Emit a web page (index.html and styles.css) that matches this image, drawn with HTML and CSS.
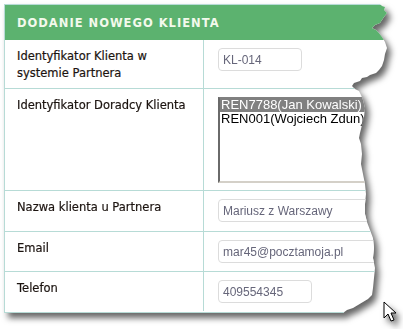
FILE: index.html
```html
<!DOCTYPE html>
<html lang="pl">
<head>
<meta charset="utf-8">
<title>Dodanie nowego klienta</title>
<link rel="stylesheet" href="styles.css">
</head>
<body>
<div class="stage">
  <div class="paper">
    <div class="head">Dodanie nowego klienta</div>
    <div class="row r1">
      <div class="label">Identyfikator Klienta w systemie Partnera</div>
      <div class="value"><input class="field f-short" type="text" value="KL-014"></div>
    </div>
    <div class="row r2">
      <div class="label">Identyfikator Doradcy Klienta</div>
      <div class="value">
        <div class="listbox" role="listbox">
          <div class="opt sel" role="option">REN7788(Jan Kowalski)</div>
          <div class="opt" role="option">REN001(Wojciech Zdun)</div>
        </div>
      </div>
    </div>
    <div class="row r3">
      <div class="label">Nazwa klienta u Partnera</div>
      <div class="value"><input class="field f-long" type="text" value="Mariusz z Warszawy"></div>
    </div>
    <div class="row r4">
      <div class="label">Email</div>
      <div class="value"><input class="field f-long" type="text" value="mar45@pocztamoja.pl"></div>
    </div>
    <div class="row r5">
      <div class="label">Telefon</div>
      <div class="value"><input class="field f-mid" type="text" value="409554345"></div>
    </div>
  </div>
  <svg class="cursor" width="14" height="22" viewBox="0 0 14 22" aria-hidden="true">
    <path d="M1 1 L1 17 L5 13 L8 20 L11 19 L8 12 L13 12 Z" fill="#fff" stroke="#000" stroke-width="1" stroke-linejoin="miter"/>
  </svg>
</div>
</body>
</html>
```
FILE: styles.css
```css
html, body {
  margin: 0;
  padding: 0;
  background: #ffffff;
}
.stage {
  position: relative;
  width: 403px;
  height: 329px;
  padding: 4px 0 0 4px;
  box-sizing: border-box;
  filter: drop-shadow(4px 5px 3px rgba(0, 0, 0, 0.6));
}
.paper {
  width: 392px;
  height: 309px;
  box-sizing: border-box;
  background: #ffffff;
  border: 1px solid #b7dbd6;
  border-right: none;
  clip-path: polygon(
    0 0, 376px 0, 378px 2px, 381px 3px, 380px 6px, 383px 9px, 380px 13px, 378px 16px,
    376px 19px, 371px 21px, 368px 24px, 372px 26px, 375px 29px, 378px 33px, 381px 38px,
    383px 44px, 381px 50px, 380px 56px, 378px 62px, 375px 66px, 372px 69px, 366px 71px,
    363px 73px, 358px 74px, 356px 77px, 350px 79px, 348px 82px, 351px 85px, 355px 87px,
    357px 91px, 359px 96px, 361px 104px, 360px 113px, 358px 121px, 356px 129px, 355px 134px,
    357px 140px, 358px 150px, 357px 160px, 359px 170px, 361px 180px, 362px 190px,
    361px 200px, 361px 210px, 363px 218px, 366px 226px, 369px 234px, 370px 244px,
    369px 254px, 371px 264px, 370px 274px, 369px 284px, 368px 291px, 364px 295px,
    359px 298px, 354px 301px, 349px 304px, 343px 306px, 339px 309px, 0 309px
  );
}
.head {
  height: 35px;
  line-height: 36px;
  background: #5cb26f;
  color: #f3f9ec;
  font-family: "DejaVu Sans", "Liberation Sans", sans-serif;
  font-weight: bold;
  font-size: 11.5px;
  letter-spacing: 1px;
  text-transform: uppercase;
  padding-left: 12px;
}
.row {
  display: grid;
  grid-template-columns: 199px 1fr;
  border-bottom: 1px solid #b7dbd6;
  box-sizing: border-box;
}
.r1 { height: 49px; }
.r2 { height: 102px; }
.r3 { height: 41px; }
.r4 { height: 40px; }
.r5 { height: 39px; border-bottom: none; }
.label {
  border-right: 1px solid #b7dbd6;
  padding: 8px 12px 0 12px;
  font-family: "DejaVu Sans", "Liberation Sans", sans-serif;
  font-size: 11.5px;
  line-height: 17px;
  color: #1c1410;
  -webkit-text-stroke: 0.2px #1c1410;
}
.value {
  padding: 8px 0 0 14px;
}
.field {
  display: block;
  margin: 0;
  height: 23px;
  box-sizing: border-box;
  border: 1px solid #dcdcdc;
  border-radius: 4px;
  padding: 0 4px;
  font-family: "Liberation Sans", Arial, sans-serif;
  font-size: 12px;
  color: #66667a;
  background: #ffffff;
  outline: none;
}
.f-short { width: 84px; }
.f-mid { width: 94px; }
.f-long { width: 160px; }
.listbox {
  width: 160px;
  height: 86px;
  box-sizing: border-box;
  border-top: 1px solid #808080;
  border-left: 2px solid #6a6a6a;
  border-bottom: 2px solid #d4d0c8;
  border-right: 1px solid #d4d0c8;
  font-family: "Liberation Sans", Arial, sans-serif;
  font-size: 13px;
  color: #000;
  white-space: nowrap;
}
.opt {
  height: 14px;
  line-height: 14px;
  padding-left: 1px;
}
.opt.sel {
  background: #808080;
  color: #ffffff;
}
.cursor {
  position: absolute;
  left: 383px;
  top: 301px;
}
```
